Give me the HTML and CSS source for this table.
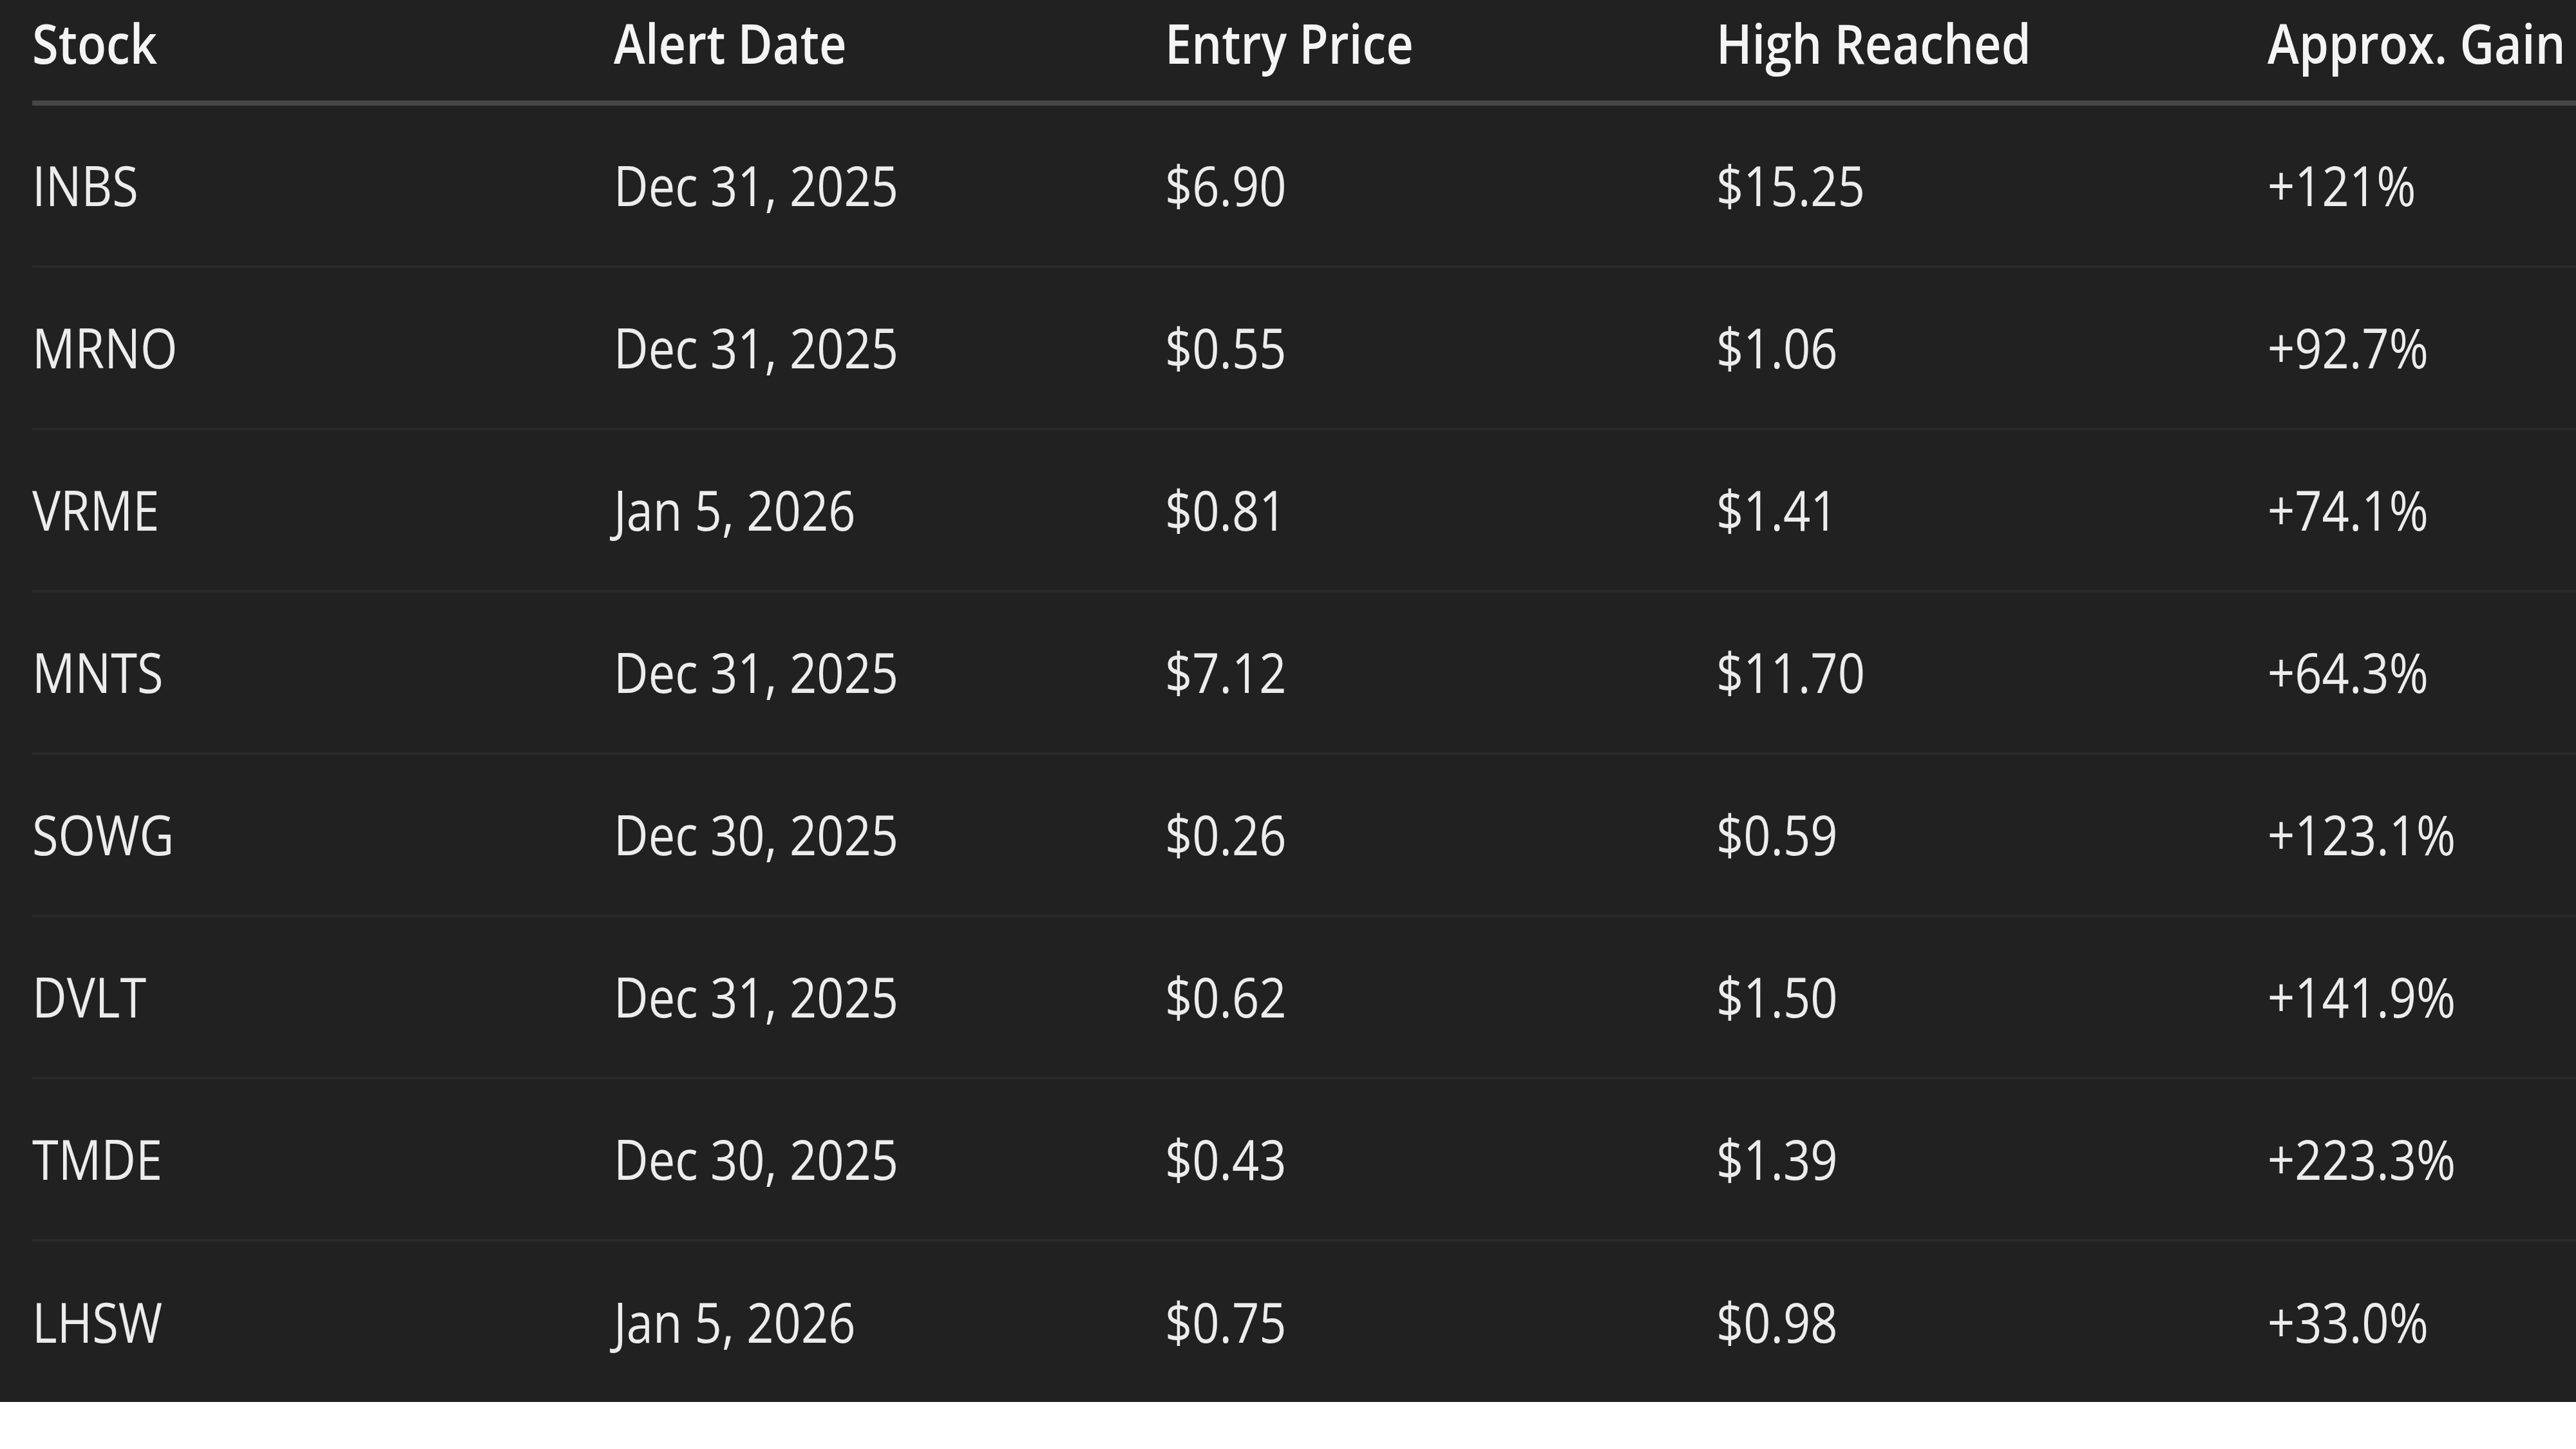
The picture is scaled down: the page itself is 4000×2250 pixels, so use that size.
FILE: index.html
```html
<!DOCTYPE html>
<html lang="en">
<head>
<meta charset="utf-8">
<title>Stock Alerts</title>
<link rel="stylesheet" href="styles.css">
</head>
<body>
<div class="panel">
  <div class="table">
    <div class="row head">
      <div class="cell"><span class="t">Stock</span></div>
      <div class="cell"><span class="t">Alert Date</span></div>
      <div class="cell"><span class="t">Entry Price</span></div>
      <div class="cell"><span class="t">High Reached</span></div>
      <div class="cell"><span class="t">Approx. Gain</span></div>
    </div>
    <div class="row">
      <div class="cell"><span class="t">INBS</span></div>
      <div class="cell"><span class="t">Dec 31, 2025</span></div>
      <div class="cell"><span class="t">$6.90</span></div>
      <div class="cell"><span class="t">$15.25</span></div>
      <div class="cell"><span class="t">+121%</span></div>
    </div>
    <div class="row">
      <div class="cell"><span class="t">MRNO</span></div>
      <div class="cell"><span class="t">Dec 31, 2025</span></div>
      <div class="cell"><span class="t">$0.55</span></div>
      <div class="cell"><span class="t">$1.06</span></div>
      <div class="cell"><span class="t">+92.7%</span></div>
    </div>
    <div class="row">
      <div class="cell"><span class="t">VRME</span></div>
      <div class="cell"><span class="t">Jan 5, 2026</span></div>
      <div class="cell"><span class="t">$0.81</span></div>
      <div class="cell"><span class="t">$1.41</span></div>
      <div class="cell"><span class="t">+74.1%</span></div>
    </div>
    <div class="row">
      <div class="cell"><span class="t">MNTS</span></div>
      <div class="cell"><span class="t">Dec 31, 2025</span></div>
      <div class="cell"><span class="t">$7.12</span></div>
      <div class="cell"><span class="t">$11.70</span></div>
      <div class="cell"><span class="t">+64.3%</span></div>
    </div>
    <div class="row">
      <div class="cell"><span class="t">SOWG</span></div>
      <div class="cell"><span class="t">Dec 30, 2025</span></div>
      <div class="cell"><span class="t">$0.26</span></div>
      <div class="cell"><span class="t">$0.59</span></div>
      <div class="cell"><span class="t">+123.1%</span></div>
    </div>
    <div class="row">
      <div class="cell"><span class="t">DVLT</span></div>
      <div class="cell"><span class="t">Dec 31, 2025</span></div>
      <div class="cell"><span class="t">$0.62</span></div>
      <div class="cell"><span class="t">$1.50</span></div>
      <div class="cell"><span class="t">+141.9%</span></div>
    </div>
    <div class="row">
      <div class="cell"><span class="t">TMDE</span></div>
      <div class="cell"><span class="t">Dec 30, 2025</span></div>
      <div class="cell"><span class="t">$0.43</span></div>
      <div class="cell"><span class="t">$1.39</span></div>
      <div class="cell"><span class="t">+223.3%</span></div>
    </div>
    <div class="row last">
      <div class="cell"><span class="t">LHSW</span></div>
      <div class="cell"><span class="t">Jan 5, 2026</span></div>
      <div class="cell"><span class="t">$0.75</span></div>
      <div class="cell"><span class="t">$0.98</span></div>
      <div class="cell"><span class="t">+33.0%</span></div>
    </div>
  </div>
</div>
</body>
</html>
```

FILE: styles.css
```css
html, body {
  margin: 0;
  padding: 0;
  background: #ffffff;
}

body {
  width: 4000px;
  overflow: hidden;
  font-family: "Open Sans", "Noto Sans", sans-serif;
}

.panel {
  background: #212121;
  width: 4000px;
  padding-left: 50px;
  box-sizing: border-box;
}

.table {
  display: flex;
  flex-direction: column;
}

.row {
  display: grid;
  grid-template-columns: 903px 856px 856px 856px 1px;
  align-items: center;
  height: 252px;
  box-sizing: border-box;
  border-bottom: 4px solid #2a2a2a;
  color: #ececec;
  font-size: 74px;
  font-weight: 400;
}

.row.last {
  height: 249px;
  border-bottom: none;
}

.row.head {
  height: 164px;
  border-bottom: 8px solid #464646;
  padding-bottom: 22px;
  font-weight: 600;
  color: #f4f4f4;
}

.cell {
  white-space: nowrap;
  line-height: 1;
}

.t {
  display: inline-block;
  transform: scaleY(1.16);
  transform-origin: center;
}
```
